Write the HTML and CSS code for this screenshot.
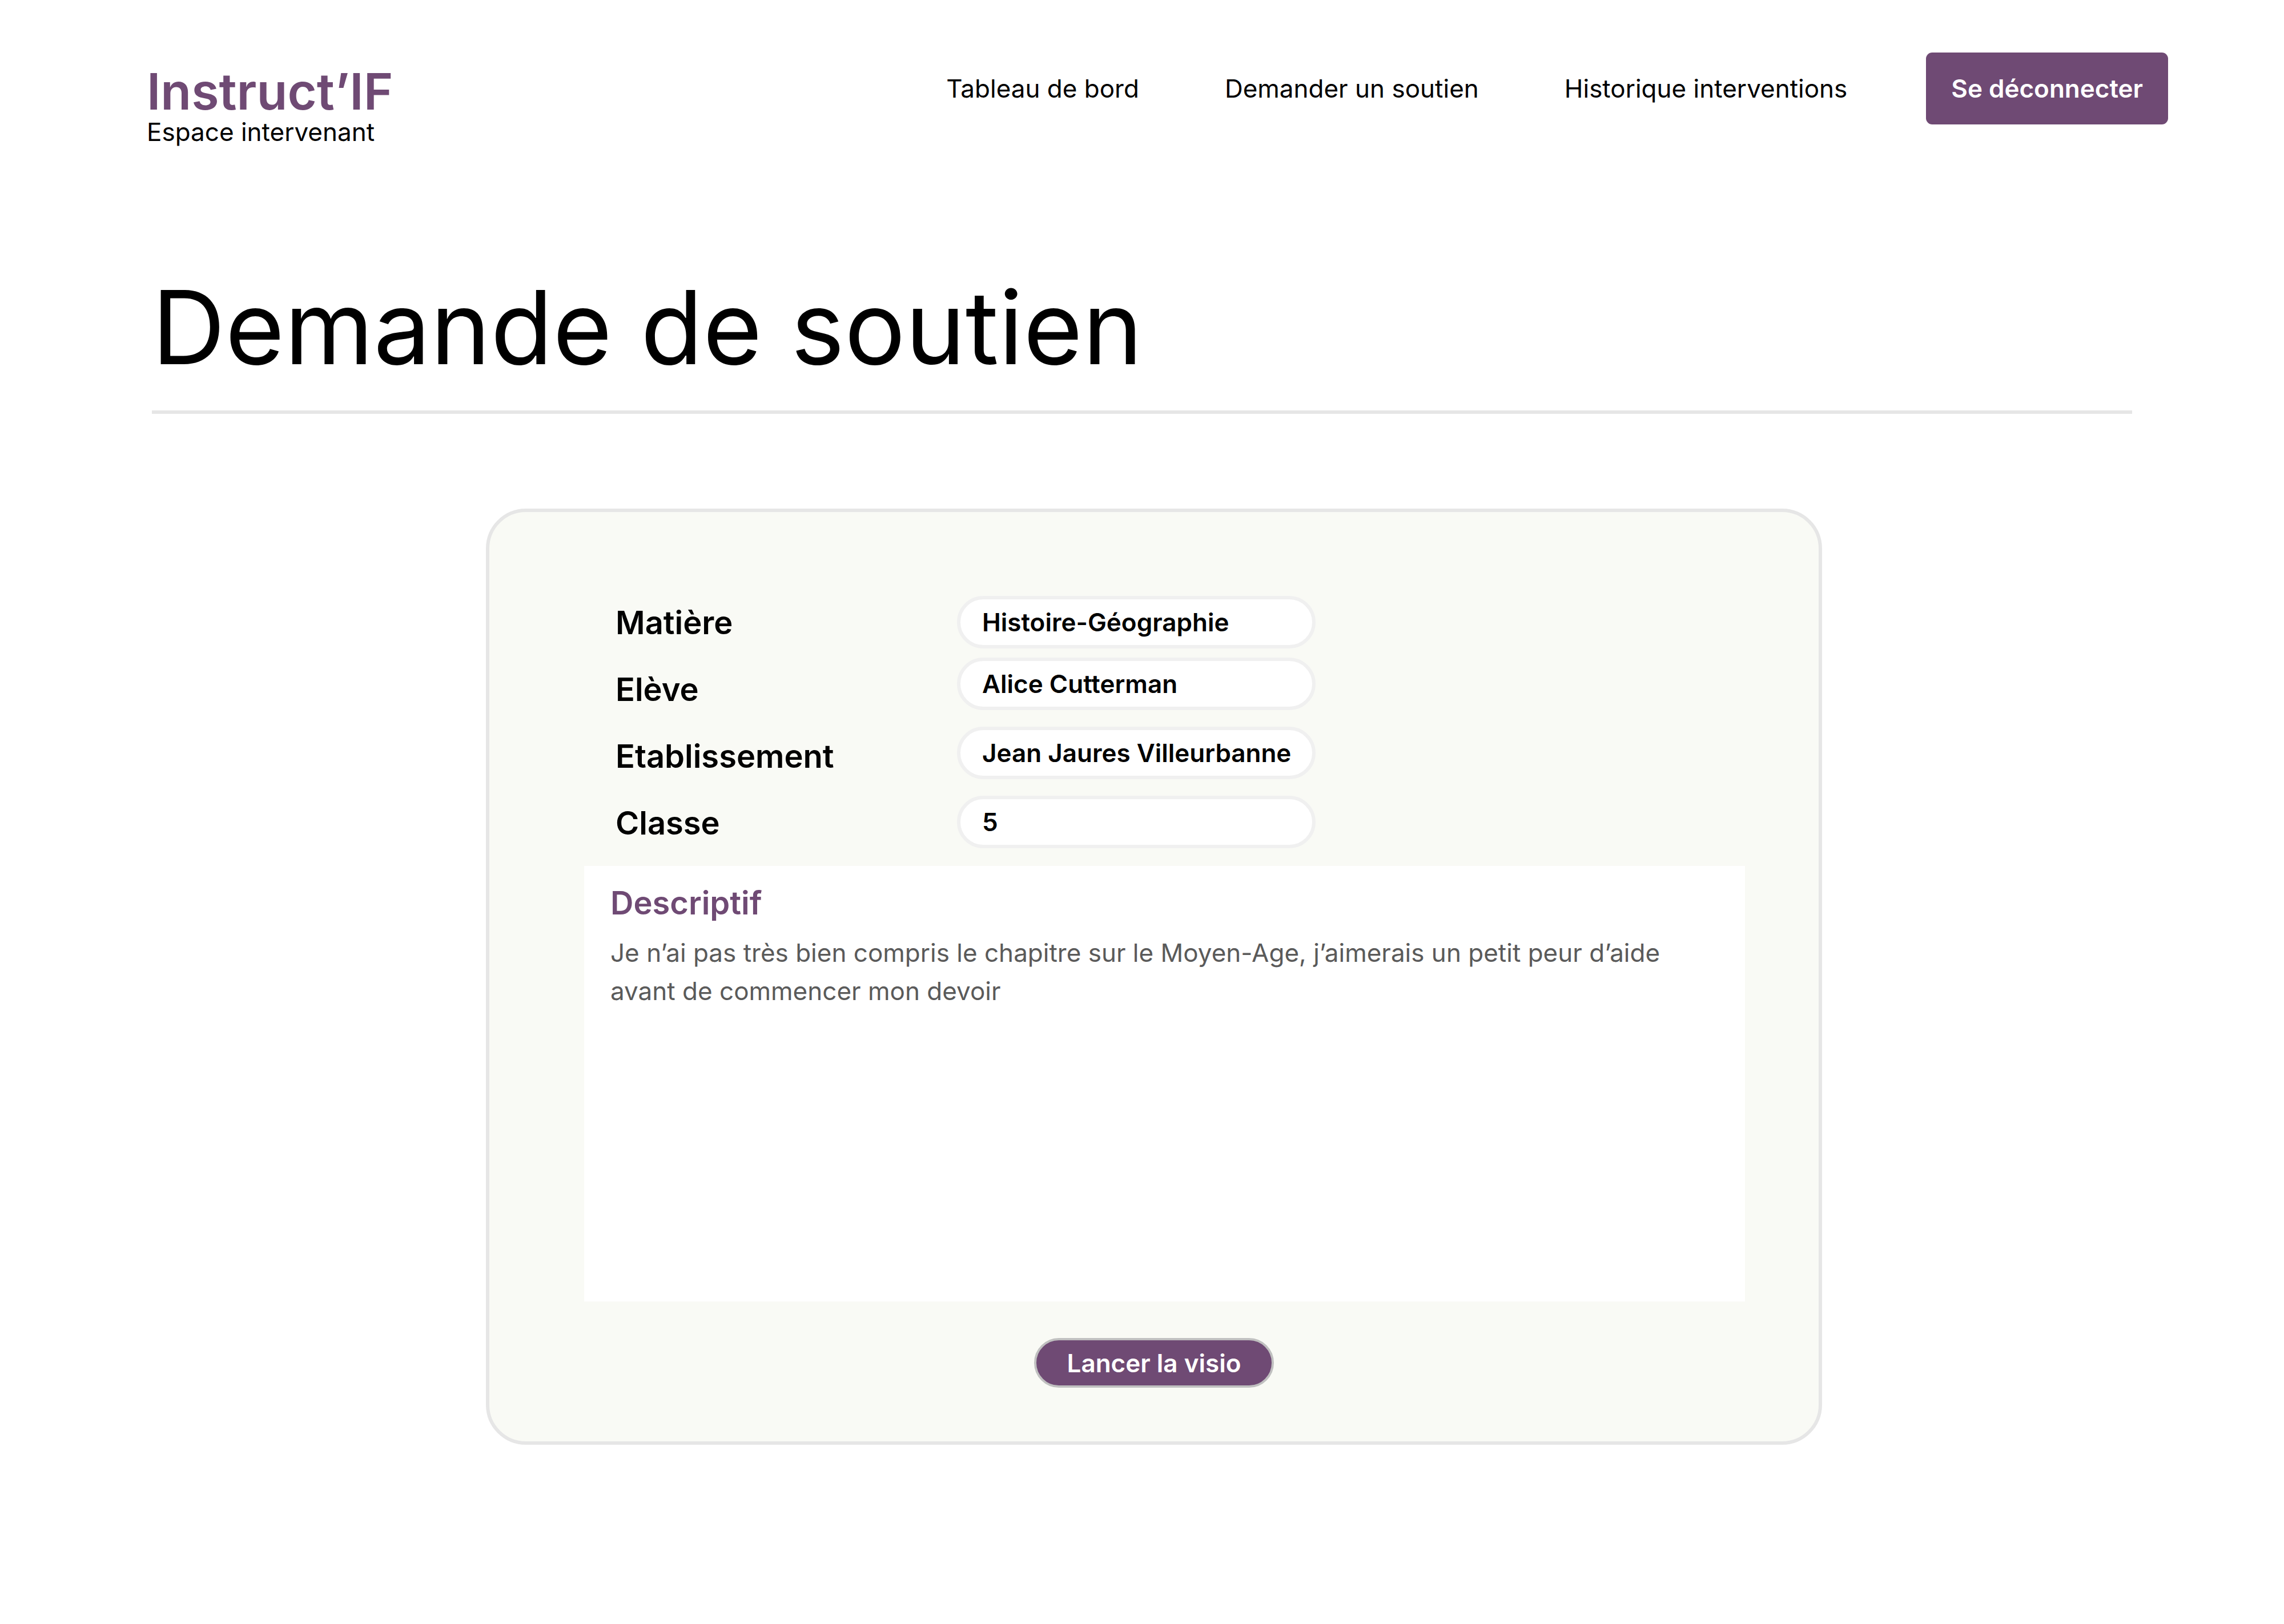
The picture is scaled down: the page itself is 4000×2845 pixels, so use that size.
FILE: index.html
```html
<!DOCTYPE html>
<html lang="fr">
<head>
<meta charset="utf-8">
<meta name="viewport" content="width=device-width, initial-scale=1">
<title>Instruct’IF – Demande de soutien</title>
<link rel="stylesheet" href="styles.css">
</head>
<body>
<header class="header">
  <div class="brand">
    <a class="logo" href="#">Instruct’IF</a>
    <span class="space">Espace intervenant</span>
  </div>
  <nav class="nav">
    <a class="nav-link" href="#">Tableau de bord</a>
    <a class="nav-link" href="#">Demander un soutien</a>
    <a class="nav-link" href="#">Historique interventions</a>
    <button class="logout" type="button">Se déconnecter</button>
  </nav>
</header>
<main class="main">
  <h1 class="title">Demande de soutien</h1>
  <hr class="rule">
  <form class="card">
    <div class="fields">
      <div class="labels">
        <label class="label" for="matiere">Matière</label>
        <label class="label" for="eleve">Elève</label>
        <label class="label" for="etablissement">Etablissement</label>
        <label class="label" for="classe">Classe</label>
      </div>
      <div class="inputs">
        <input class="input" id="matiere" type="text" value="Histoire-Géographie">
        <input class="input" id="eleve" type="text" value="Alice Cutterman">
        <input class="input input-school" id="etablissement" type="text" value="Jean Jaures Villeurbanne">
        <input class="input input-school" id="classe" type="text" value="5">
      </div>
    </div>
    <div class="description">
      <label class="description-label" for="descriptif">Descriptif</label>
      <textarea class="description-text" id="descriptif">Je n’ai pas très bien compris le chapitre sur le Moyen-Age, j’aimerais un petit peur d’aide avant de commencer mon devoir</textarea>
    </div>
    <button class="launch" type="button">Lancer la visio</button>
  </form>
</main>
</body>
</html>
```
FILE: styles.css
```css
:root {
  --purple: #6f4a74;
  --line: #e6e6e6;
}

* {
  box-sizing: border-box;
}

body {
  margin: 0;
  background: #fff;
  color: #000;
  font-family: Inter, "Liberation Sans", sans-serif;
  font-size: 44px;
  line-height: 54px;
}

button,
input,
textarea {
  margin: 0;
  font: inherit;
  color: inherit;
}

.header {
  display: flex;
  align-items: flex-start;
  justify-content: space-between;
  padding: 92px 203px 0 257px;
}

.brand {
  display: flex;
  flex-direction: column;
  padding-top: 24px;
}

.logo {
  color: var(--purple);
  font-size: 88px;
  font-weight: 600;
  line-height: 88px;
  text-decoration: none;
}

.nav {
  display: flex;
  align-items: center;
  gap: 150px;
}

.nav-link {
  color: inherit;
  text-decoration: none;
}

.logout {
  margin-left: -12px;
  padding: 36px 44px;
  border: 0;
  border-radius: 11px;
  background: var(--purple);
  color: #fff;
  font-weight: 600;
}

.main {
  padding: 209px 266px 314px;
}

.title {
  margin: 0;
  font-size: 178px;
  font-weight: 400;
  line-height: 214px;
}

.rule {
  height: 6px;
  margin: 38px 0 166px;
  border: 0;
  background: var(--line);
}

.card {
  display: flex;
  flex-direction: column;
  margin: 0 543px 0 585px;
  padding: 147px 0 94px;
  border: 6px solid var(--line);
  border-radius: 70px;
  background: #f9faf5;
}

.fields {
  display: flex;
  padding-left: 221px;
}

.labels {
  display: flex;
  flex-direction: column;
  gap: 49px;
  width: 598px;
  padding-top: 13px;
}

.label,
.description-label {
  font-size: 56px;
  font-weight: 600;
  line-height: 68px;
}

.inputs {
  display: flex;
  flex-direction: column;
  gap: 16px;
}

.input {
  width: 628px;
  height: 92px;
  padding: 0 24px 0 38px;
  border: 6px solid #f0f0f0;
  border-radius: 46px;
  background: #fff;
  font-weight: 600;
}

.input-school {
  margin-top: 13px;
}

.description {
  display: flex;
  flex-direction: column;
  gap: 20px;
  min-height: 763px;
  margin: 31px 129px 64px 166px;
  padding: 31px 46px;
  background: #fff;
}

.description-label {
  color: var(--purple);
}

.description-text {
  flex: 1;
  padding: 0;
  border: 0;
  background: transparent;
  color: #5a5a5a;
  line-height: 67px;
  resize: none;
}

.launch {
  align-self: center;
  height: 87px;
  padding: 0 54px;
  border: 4px solid #c0c0c0;
  border-radius: 44px;
  background: var(--purple);
  color: #fff;
  font-weight: 600;
}
```
